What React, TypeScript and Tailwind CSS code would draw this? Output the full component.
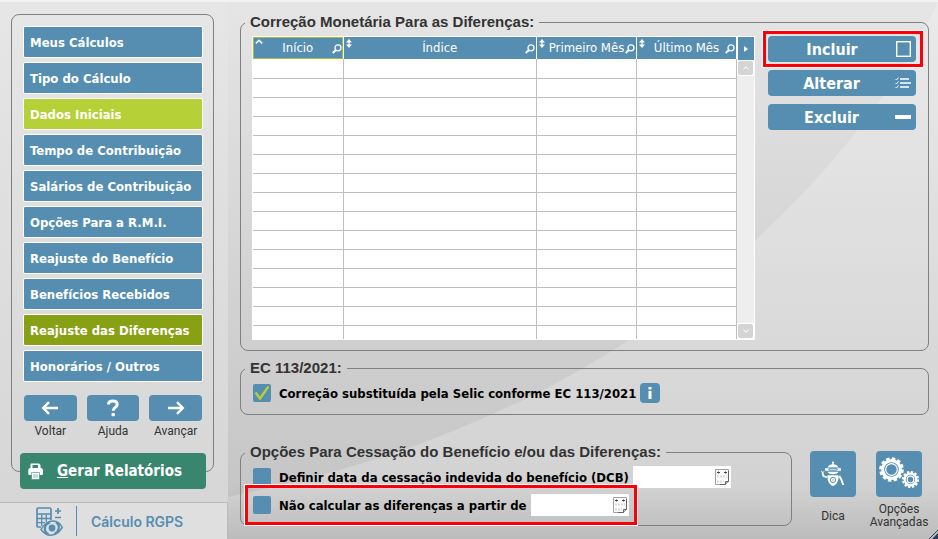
import React, { useState } from 'react';
import clsx from 'clsx';

type MenuState = 'normal' | 'done' | 'current';

interface MenuItem {
  label: string;
  state: MenuState;
}

const menuItems: MenuItem[] = [
  { label: 'Meus Cálculos', state: 'normal' },
  { label: 'Tipo do Cálculo', state: 'normal' },
  { label: 'Dados Iniciais', state: 'done' },
  { label: 'Tempo de Contribuição', state: 'normal' },
  { label: 'Salários de Contribuição', state: 'normal' },
  { label: 'Opções Para a R.M.I.', state: 'normal' },
  { label: 'Reajuste do Benefício', state: 'normal' },
  { label: 'Benefícios Recebidos', state: 'normal' },
  { label: 'Reajuste das Diferenças', state: 'current' },
  { label: 'Honorários / Outros', state: 'normal' },
];

const columns = ['Início', 'Índice', 'Primeiro Mês', 'Último Mês'];
const emptyRows = Array.from({ length: 15 }, (_, i) => i);

const ArrowLeftIcon = () => (
  <svg width="18" height="14" viewBox="0 0 18 14" fill="none" stroke="white" strokeWidth="2.4" aria-hidden="true">
    <path d="M17 7H2.5M8 1.2 2.2 7 8 12.8" />
  </svg>
);

const ArrowRightIcon = () => (
  <svg width="18" height="14" viewBox="0 0 18 14" fill="none" stroke="white" strokeWidth="2.4" aria-hidden="true">
    <path d="M1 7h14.5M10 1.2 15.8 7 10 12.8" />
  </svg>
);

const QuestionIcon = () => (
  <svg width="14" height="18" viewBox="0 0 14 18" fill="none" aria-hidden="true">
    <path d="M2.5 5.6C2.5 3.3 4.2 2 6.8 2c2.7 0 4.4 1.4 4.4 3.5 0 2.900-4 3-4 6.200" stroke="white" strokeWidth="3" />
    <rect x="5.500" y="14" width="3.400" height="3.200" rx="1" fill="white" />
  </svg>
);

const PrinterIcon = () => (
  <svg width="15" height="17" viewBox="0 0 15 17" aria-hidden="true">
    <path d="M3 .5h8l1.500 1.500v4h-10V1z" fill="white" />
    <path d="M4.500 2h5.500v3.500H4.500z" fill="#38866d" />
    <path d="M1.500 5h12L15 6.500v5L13.800 12H1.200L.3 11.500v-5z" fill="white" />
    <path d="M3.500 9.500h8v7h-8z" fill="white" stroke="#38866d" strokeWidth=".6" />
    <path d="M5 12h5M5 14h5" stroke="#8cbcac" />
  </svg>
);

const SearchIcon = () => (
  <svg width="10" height="10" viewBox="0 0 10 10" fill="none" stroke="white" aria-hidden="true">
    <circle cx="6" cy="3.800" r="3" strokeWidth="1.300" />
    <path d="M3.900 6 .7 9" strokeWidth="1.900" />
  </svg>
);

const SortIcon = () => (
  <svg width="6" height="9" viewBox="0 0 6 9" fill="white" aria-hidden="true">
    <path d="M3 0 6 3.500H0zM3 9 0 5.500h6zM2.400 2h1.200v5H2.400z" />
  </svg>
);

const SortedIcon = () => (
  <svg width="8" height="5" viewBox="0 0 8 5" fill="none" stroke="white" strokeWidth="1.500" aria-hidden="true">
    <path d="M.8 4.400 4 1.200l3.200 3.200" />
  </svg>
);

const CalendarIcon = () => (
  <svg width="14" height="16" viewBox="0 0 14 16" fill="none" aria-hidden="true">
    <path d="M.5.5h13v12l-3 3H.5z" fill="#fafafa" stroke="#a0a0a0" />
    <path d="M13.500 2v10.500l-3 3H5" stroke="#666" />
    <path d="M13.500 12.500h-3v3" fill="#ccc" stroke="#666" />
    <path d="M2 3.500h3M9 3.500h3M3.500 2.500v2M10.500 2.500v2" stroke="#444" />
    <path d="M2 7.500h10M2 12.500h7" stroke="#dcdcdc" strokeWidth="2" strokeDasharray="2 1" />
  </svg>
);

const CalculatorEyeIcon = () => (
  <svg width="27" height="29" viewBox="0 0 27 29" fill="none" stroke="#558eb0" aria-hidden="true">
    <path d="M5 20H2.200Q1 20 1 18.800V2.200Q1 1 2.200 1h11.600Q15 1 15 2.200V13" strokeWidth="1.700" />
    <path d="M1 7h14M1 11.500h14M1 15.700h8M5.700 7v12M10.300 7v8" strokeWidth="1.300" />
    <path d="M22 1v6M19 4h6M19 10.500h6" strokeWidth="1.700" />
    <path d="M5 22.500C9 15.500 13 14 17 14c4 0 7 2 9.300 6.500C22 27 18.500 28.200 14.500 28.200S8 26.500 5 22.500z" fill="#dfdfdf" strokeWidth="1.500" />
    <path d="M14 15.500c-6 2-7 9-1.500 11.500M20 15.500c4.500 2.500 3.500 9-1.500 11.500" strokeWidth="2.200" />
    <circle cx="16" cy="21" r="3.400" fill="#558eb0" stroke="none" />
  </svg>
);

const RobotIcon = () => (
  <svg width="24" height="26" viewBox="0 0 24 26" aria-hidden="true">
    <path d="M12 1v3" stroke="white" strokeWidth="1.200" />
    <circle cx="12" cy="1.500" r="1" fill="white" />
    <path d="M6.500 6.500C7.500 4 9.500 3.200 12 3.200s4.500.8 5.500 3.300z" fill="white" />
    <path d="M4 7.200h16v2.600H4z" fill="white" />
    <rect x="7.500" y="6.800" width="9" height="3" rx="1.500" fill="#558eb0" />
    <path d="M8.500 8.300h7" stroke="white" strokeWidth=".8" />
    <path d="M6.500 10.800h11c-1 1.800-3 2.500-5.500 2.500s-4.500-.7-5.500-2.500z" fill="white" />
    <path d="M6.500 14.300h11c.5 5-1.700 9.700-5.500 10.700-3.800-1-6-5.700-5.500-10.700z" fill="white" />
    <circle cx="12" cy="19" r="2.600" fill="none" stroke="#558eb0" />
    <path d="M11.300 19h1.400" stroke="#558eb0" />
    <path d="M6 16.300 2.300 15 1.500 11.500" fill="none" stroke="white" strokeWidth="1.700" />
    <path d="M.4 9.800 1.500 12 3 10.300" fill="none" stroke="white" />
    <path d="m18.300 15 2 3.500 2 5.500" fill="none" stroke="white" strokeWidth="1.900" />
  </svg>
);

const GearsIcon = () => (
  <svg width="42" height="36" viewBox="0 0 42 36" fill="none" stroke="white" aria-hidden="true">
    <circle cx="13.500" cy="13.500" r="8.900" strokeWidth="3.200" />
    <circle cx="13.500" cy="13.500" r="11" strokeWidth="2.600" strokeDasharray="3.456 2.304" />
    <circle cx="13.500" cy="13.500" r="5.800" strokeWidth="1.200" />
    <circle cx="32.500" cy="23.500" r="5.800" strokeWidth="2.200" />
    <circle cx="32.500" cy="23.500" r="7.500" strokeWidth="2.200" strokeDasharray="2.356 1.571" />
    <circle cx="32.500" cy="23.500" r="3.300" strokeWidth="1.200" />
  </svg>
);

const ListIcon = () => (
  <svg width="16" height="12" viewBox="0 0 16 12" fill="none" stroke="white" aria-hidden="true">
    <path d="M5 2h9M5 6h11M5 10h9" strokeWidth="1.300" />
    <path d="m.5 2 1 1L3.500.5M.5 6l1 1 2-2.500M.5 10l1 1 2-2.500" strokeWidth=".9" />
  </svg>
);

// Soft curve that splits the window background
const Backdrop = () => (
  <svg
    className="pointer-events-none absolute inset-0 h-full w-full"
    viewBox="0 0 938 539"
    preserveAspectRatio="none"
    aria-hidden="true"
  >
    <path
      d="M190 504C265 490 330 474 397 452 475 424 545 392 612 350 690 302 745 252 800 195 845 148 875 107 900 70 915 45 928 20 938 0V539H190z"
      fill="white"
      fillOpacity=".22"
    />
  </svg>
);

interface GroupProps {
  title: string;
  className?: string;
  children: React.ReactNode;
}

const Group: React.FC<GroupProps> = ({ title, className, children }) => (
  <fieldset className={clsx('min-w-0 rounded-lg border border-[#808080]', className)}>
    <legend className="ml-1 px-[5px] text-[15px] leading-5 font-bold whitespace-nowrap text-[#333333]">{title}</legend>
    {children}
  </fieldset>
);

const Highlight: React.FC<{ className: string }> = ({ className }) => (
  <div
    className={clsx('pointer-events-none absolute border-3 border-[#fb0007] ring-1 ring-white', className)}
    aria-hidden="true"
  />
);

interface OptionProps {
  id: string;
  label: string;
  checked: boolean;
  onChange: (checked: boolean) => void;
}

const Option: React.FC<OptionProps> = ({ id, label, checked, onChange }) => (
  <label htmlFor={id} className="flex items-center gap-2 whitespace-nowrap">
    <span className="relative block h-[18px] w-[18px]">
      <input
        id={id}
        type="checkbox"
        checked={checked}
        onChange={(e) => onChange(e.target.checked)}
        className="block h-full w-full appearance-none rounded-xs bg-[#558eb0]"
      />
      {checked && (
        <svg className="pointer-events-none absolute inset-0" width="18" height="18" viewBox="0 0 18 18" fill="none" aria-hidden="true">
          <path d="m2.500 8.500 4.500 6 8.500-12" stroke="#b6d037" strokeWidth="2.400" />
        </svg>
      )}
    </span>
    <span className="pt-0.5 font-['DejaVu_Sans_Condensed','DejaVu_Sans',sans-serif] text-[13px] leading-[18px] font-bold text-black">
      {label}
    </span>
  </label>
);

const DateField: React.FC<{ label: string }> = ({ label }) => (
  <div className="flex h-[22px] w-[98px] items-center bg-white pr-[2px]">
    <input type="text" aria-label={label} className="h-full min-w-0 flex-1 bg-transparent px-1 text-xs outline-none" />
    <button type="button" aria-label="Abrir calendário">
      <CalendarIcon />
    </button>
  </div>
);

const actionClass =
  "flex h-[26px] w-full items-center rounded bg-[#558eb0] pr-[5px] font-['DejaVu_Sans_Condensed','DejaVu_Sans',sans-serif] text-[16px] font-bold text-white";

const Sidebar = () => (
  <aside className="relative flex w-[228px] shrink-0 flex-col bg-linear-to-b from-[#e6e6e6] to-[#d5d5d5] pt-3">
    <div className="mr-[14px] ml-[11px] rounded-lg border border-[#808080] pt-[11px] pr-[10px] pb-8 pl-[11px]">
      <nav className="flex flex-col gap-1">
        {menuItems.map((item) => (
          <button
            key={item.label}
            type="button"
            className={clsx(
              "h-8 rounded-xs border border-white px-1.5 pt-0.5 text-left font-['DejaVu_Sans_Condensed','DejaVu_Sans',sans-serif] text-[13px] font-bold whitespace-nowrap text-white",
              item.state === 'normal' && 'bg-[#558eb0]',
              item.state === 'done' && 'bg-[#b6d037]',
              item.state === 'current' && 'bg-[#88a013]'
            )}
          >
            {item.label}
          </button>
        ))}
      </nav>

      <div className="mt-[13px] grid grid-cols-3 gap-[10px] px-px">
        {[
          { label: 'Voltar', icon: <ArrowLeftIcon /> },
          { label: 'Ajuda', icon: <QuestionIcon /> },
          { label: 'Avançar', icon: <ArrowRightIcon /> },
        ].map((item) => (
          <button key={item.label} type="button" className="flex flex-col items-center gap-[2px]">
            <span className="flex h-[26px] w-full items-center justify-center rounded-sm bg-[#558eb0]">{item.icon}</span>
            <span className="font-['Roboto',sans-serif] text-[12px] leading-4 text-[#333333]">{item.label}</span>
          </button>
        ))}
      </div>
    </div>

    <button
      type="button"
      className="relative mr-[22px] -mt-[19px] ml-5 flex h-9 items-center gap-[14px] rounded bg-[#38866d] pl-2 font-['DejaVu_Sans_Condensed','DejaVu_Sans',sans-serif] text-[15px] font-bold whitespace-nowrap text-white"
    >
      <PrinterIcon />
      <span>
        <span className="underline">G</span>erar Relatórios
      </span>
    </button>

    <div className="mt-auto flex h-[37px] items-center border-t border-r border-[#bbbbbb] bg-[#dfdfdf] pl-9">
      <CalculatorEyeIcon />
      <div className="ml-[13px] h-[30px] w-px bg-[#558eb0]" />
      <span className="ml-[14px] font-['Inter',sans-serif] text-[14px] font-semibold text-[#558eb0]">Cálculo RGPS</span>
    </div>
  </aside>
);

const CorrectionTable = () => (
  <div className="flex h-[304px] min-w-0 flex-1 overflow-hidden border border-white bg-white">
    <div className="min-w-0 flex-1 overflow-hidden">
      <table className="w-full table-fixed border-collapse">
        <colgroup>
          <col className="w-[90px]" />
          <col />
          <col className="w-[100px]" />
          <col className="w-[100px]" />
        </colgroup>
        <thead>
          <tr className="h-[22px]">
            {columns.map((column, i) => (
              <th
                key={column}
                scope="col"
                className={clsx(
                  'relative border-r border-r-white bg-[#558eb0] p-0 text-center text-[13px] leading-[22px] font-normal whitespace-nowrap text-white',
                  "font-['DejaVu_Sans_Condensed','DejaVu_Sans',sans-serif]",
                  i === 0 && 'inset-ring inset-ring-[#a3bf35]'
                )}
              >
                <span className="absolute top-0.5 left-0.5">{i === 0 ? <SortedIcon /> : <SortIcon />}</span>
                {column}
                <button type="button" aria-label={`Pesquisar ${column}`} className="absolute top-[7px] right-px">
                  <SearchIcon />
                </button>
              </th>
            ))}
          </tr>
        </thead>
        <tbody>
          {emptyRows.map((row) => (
            <tr key={row} className="h-[19px]">
              {columns.map((column) => (
                <td key={column} className="border-r border-b border-[#bfbfbf] p-0" />
              ))}
            </tr>
          ))}
        </tbody>
      </table>
    </div>
    <div className="flex w-[17px] flex-col items-center bg-[#eeeeee]">
      <button type="button" aria-label="Mais colunas" className="flex h-[23px] w-full items-center justify-center border-l border-white bg-[#558eb0]">
        <svg width="4" height="6" viewBox="0 0 4 6" fill="white" aria-hidden="true">
          <path d="M0 0 4 3 0 6z" />
        </svg>
      </button>
      <div className="w-full bg-white p-px">
        <button type="button" aria-label="Rolar para cima" className="flex h-[14px] w-full items-center justify-center rounded-xs bg-[#d4d4d4]">
          <svg width="6" height="4" viewBox="0 0 6 4" fill="none" stroke="white" aria-hidden="true">
            <path d="m.5 3.500 2.500-3 2.500 3" />
          </svg>
        </button>
      </div>
      <div className="mt-auto w-full bg-white p-px">
        <button type="button" aria-label="Rolar para baixo" className="flex h-[14px] w-full items-center justify-center rounded-xs bg-[#d4d4d4]">
          <svg width="6" height="4" viewBox="0 0 6 4" fill="none" stroke="white" aria-hidden="true">
            <path d="m.5.5 2.500 3 2.500-3" />
          </svg>
        </button>
      </div>
    </div>
  </div>
);

const App = () => {
  const [selic, setSelic] = useState(true);
  const [dcb, setDcb] = useState(false);
  const [skip, setSkip] = useState(false);

  return (
    <div className="relative flex min-h-screen border-t-2 border-[#f5f1ef] bg-linear-to-b from-[#e5e5e5] via-[#c6c6c6] via-90% to-[#aaaaaa] font-['Liberation_Sans',Arial,sans-serif]">
      <Backdrop />
      <div className="relative flex flex-1">
        <Sidebar />

        <main className="min-w-0 flex-1 pt-[10px] pr-[9px] pl-3">
          <Group title="Correção Monetária Para as Diferenças:">
            <div className="flex items-start gap-[13px] pt-1 pr-3 pb-[10px] pl-[11px]">
              <CorrectionTable />
              <div className="flex w-[148px] shrink-0 flex-col gap-2">
                <div className="relative">
                  <button type="button" className={actionClass}>
                    <span className="flex-1 pt-0.5 text-center">Incluir</span>
                    <svg width="15" height="16" viewBox="0 0 15 16" fill="none" stroke="white" aria-hidden="true">
                      <rect x=".7" y=".7" width="13.600" height="14.600" strokeWidth="1.400" />
                    </svg>
                  </button>
                  <Highlight className="-inset-y-[5px] -right-[7px] -left-[5px]" />
                </div>
                <button type="button" className={actionClass}>
                  <span className="flex-1 pt-0.5 text-center">Alterar</span>
                  <ListIcon />
                </button>
                <button type="button" className={actionClass}>
                  <span className="flex-1 pt-0.5 text-center">Excluir</span>
                  <span className="h-1 w-4 bg-white" />
                </button>
              </div>
            </div>
          </Group>

          <Group title="EC 113/2021:" className="mt-[7px]">
            <div className="flex items-center gap-1 pt-[5px] pb-[11px] pl-3">
              <Option
                id="selic"
                label="Correção substituída pela Selic conforme EC 113/2021"
                checked={selic}
                onChange={setSelic}
              />
              <button type="button" aria-label="Informações" className="flex h-5 w-5 items-center justify-center rounded-sm bg-[#558eb0]">
                <svg width="4" height="12" viewBox="0 0 4 12" fill="white" aria-hidden="true">
                  <path d="M.5 0h3v2.500h-3zM.5 4h3v8h-3z" />
                </svg>
              </button>
            </div>
          </Group>

          <div className="-mr-[3px] mt-[27px] flex items-start">
            <Group title="Opções Para Cessação do Benefício e/ou das Diferenças:" className="flex-1">
              <div className="flex flex-col items-start gap-1.5 pt-1 pb-[9px] pl-3">
                <div className="flex items-center gap-1">
                  <Option
                    id="dcb"
                    label="Definir data da cessação indevida do benefício (DCB)"
                    checked={dcb}
                    onChange={setDcb}
                  />
                  <DateField label="Data da cessação" />
                </div>
                <div className="relative flex items-center gap-1">
                  <Option
                    id="skip"
                    label="Não calcular as diferenças a partir de"
                    checked={skip}
                    onChange={setSkip}
                  />
                  <DateField label="Data limite das diferenças" />
                  <Highlight className="-inset-x-2 -inset-y-[9px]" />
                </div>
              </div>
            </Group>

            <div className="ml-2 flex pt-[9px] font-['Roboto',sans-serif] text-[12px] leading-[13px] text-[#333333]">
              <button type="button" className="flex w-[66px] flex-col items-center">
                <span className="flex h-[46px] w-[46px] items-center justify-center rounded-sm bg-[#558eb0]">
                  <RobotIcon />
                </span>
                <span className="mt-[13px]">Dica</span>
              </button>
              <button type="button" className="flex w-[66px] flex-col items-center">
                <span className="flex h-[46px] w-[46px] items-center justify-center rounded-sm bg-[#558eb0]">
                  <GearsIcon />
                </span>
                <span className="mt-1.5">Opções Avançadas</span>
              </button>
            </div>
          </div>
        </main>
      </div>

      <svg className="absolute right-0 bottom-0" width="9" height="9" viewBox="0 0 9 9" fill="none" aria-hidden="true">
        <path d="M9 3 3 9h6z" fill="#2c3a5e" />
        <path d="M9 0 0 9" stroke="#2c3a5e" />
      </svg>
    </div>
  );
};

export default App;
